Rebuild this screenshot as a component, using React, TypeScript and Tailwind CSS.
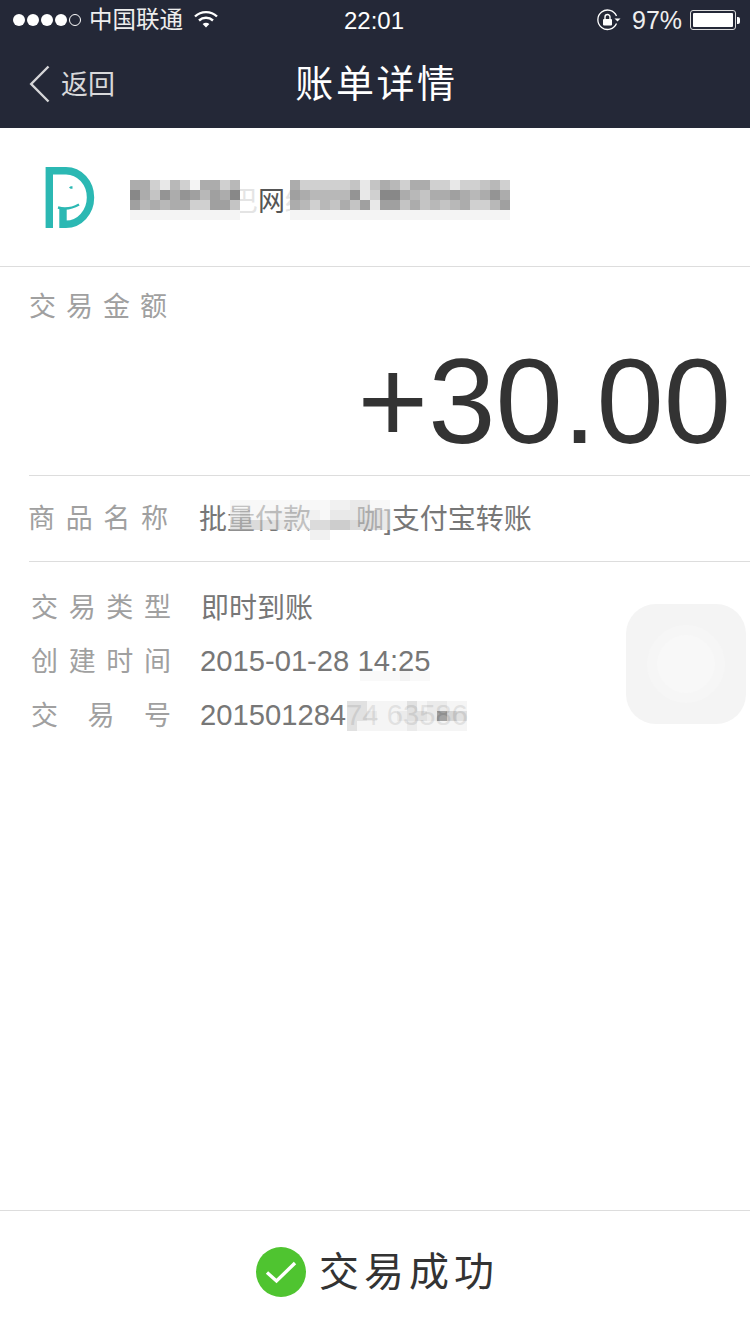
const font = "font-['Liberation_Sans','Noto_Sans_CJK_SC',sans-serif]";

// pixelated patches over the hidden text: one char per 10px cell, 0 dark .. 9 near white, "." empty
function Mosaic({ rows, className }: { rows: string[]; className: string }) {
  return (
    <svg
      className={`absolute blur-[0.6px] ${className}`}
      width={rows[0].length * 10}
      height={rows.length * 10}
      shapeRendering="crispEdges"
    >
      {rows.map((row, y) =>
        row.split("").map((c, x) => {
          if (c === ".") return null;
          const v = 136 + Number(c) * 12;
          return <rect key={`${x}-${y}`} x={x * 10} y={y * 10} width={10} height={10} fill={`rgb(${v},${v},${v})`} />;
        })
      )}
    </svg>
  );
}

function StatusBar() {
  return (
    <div className="h-10 flex items-center text-white">
      <div className="flex items-center gap-[2px] ml-[13px]">
        <span className="w-[12px] h-[12px] rounded-full bg-white" />
        <span className="w-[12px] h-[12px] rounded-full bg-white" />
        <span className="w-[12px] h-[12px] rounded-full bg-white" />
        <span className="w-[12px] h-[12px] rounded-full bg-white" />
        <span className="w-[12px] h-[12px] rounded-full border border-white" />
      </div>
      <span className="ml-[8px] mt-[2px] text-[23.5px] text-[#eeeeee]">中国联通</span>
      <svg className="ml-[11px] mb-[3px]" width="24" height="18" viewBox="0 0 24 18" fill="none" stroke="#fff" strokeWidth="2.4">
        <path d="M1 6.5C7 .6 17 .6 23 6.5" />
        <path d="M5 10.5c4-3.6 10-3.6 14 0" />
        <path d="M12 17.5 8.6 14c2-1.6 4.800-1.600 6.800 0z" fill="#fff" stroke="none" />
      </svg>
      <span className="ml-[126px] mt-[1px] w-[60px] text-[24px] font-medium">22:01</span>
      <svg className="ml-[193px]" width="24" height="22" viewBox="0 0 24 22" fill="none">
        <path d="M19.500 14.500A9.700 9.700 0 1 1 19.500 7" stroke="#fff" strokeWidth="1.300" />
        <path d="M17.500 9.500h6l-3 3z" fill="#fff" />
        <rect x="6" y="10" width="9" height="6.500" rx="1" fill="#fff" />
        <path d="M8 10V8a2.500 2.500 0 0 1 5 0v2" stroke="#fff" strokeWidth="1.400" />
      </svg>
      <span className="ml-[11px] mt-[1px] text-[25px] text-[#eeeeee]">97%</span>
      <div className="ml-[8px] flex items-center">
        <div className="w-[46px] h-[20px] rounded-[3px] border border-[#dddddd] p-[2px]">
          <div className="w-[40px] h-full rounded-[1px] bg-white" />
        </div>
        <div className="w-[3px] h-[7px] ml-[1px] bg-white rounded-r-[2px]" />
      </div>
    </div>
  );
}

function NavBar() {
  return (
    <div className="h-[88px] grid grid-cols-3 items-center">
      <div className="flex items-center pl-[29px]">
        <svg width="21" height="38" viewBox="0 0 21 38" fill="none" stroke="#d6d6d8" strokeWidth="2.4">
          <path d="M19.500 1.500 2.200 19l17.300 17.500" />
        </svg>
        <span className="ml-[11px] mt-[3px] text-[27px] text-[#d8d8da]">返回</span>
      </div>
      <div className="pl-[3px] text-center text-[38px] tracking-[2.6px] text-white whitespace-nowrap">账单详情</div>
      <div />
    </div>
  );
}

function Logo() {
  return (
    <svg width="50" height="61" viewBox="0 0 50 61" fill="none">
      <path d="M4.300 61V3.700H21A24.500 26.800 0 0 1 21 57.300H18V41" stroke="#2bb8b3" strokeWidth="7.400" />
      <path d="M13 40.500c7 2 14 1 21-3" stroke="#2bb8b3" strokeWidth="2.400" />
      <path d="M24 20.500c1-1.200 2.500-1.500 3.500-1.200v2.400c-1.500.3-2.500 0-3.500-1.200z" fill="#2bb8b3" />
    </svg>
  );
}

function Label({ chars }: { chars: string[] }) {
  return (
    <div className="w-[140px] flex justify-between text-[27px] leading-none text-[#a0a0a0]">
      {chars.map((c) => (
        <span key={c}>{c}</span>
      ))}
    </div>
  );
}

export default function App() {
  return (
    <div className={`relative w-[750px] h-[1334px] flex flex-col bg-white ${font}`}>
      <header className="bg-[#242837]">
        <StatusBar />
        <NavBar />
      </header>

      <section className="relative h-[139px] flex items-center border-b border-[#dddddd] pl-[45px]">
        <Logo />
        <span className="absolute left-[231px] top-[54px] text-[27px] text-[#e4e4e4]">巴</span>
        <span className="absolute left-[285px] top-[54px] text-[27px] text-[#e4e4e4]">终</span>
        <Mosaic
          className="left-[130px] top-[52px]"
          rows={[
            "33684693364.....3666665853463366866546",
            "03513124230.....2344441860034533234313",
            "24343366225.....3464535282253545436642",
            "99999999999.....9999999999999999999999",
          ]}
        />
        <span className="absolute left-[258px] top-[54px] text-[27px] text-[#555555]">网</span>
      </section>

      <section className="h-[209px] border-b border-[#dddddd] ml-[29px]">
        <div className="pt-[24px] text-[27px] leading-[32px] tracking-[10px] text-[#a0a0a0]">交易金额</div>
        <div className="pr-[19px] pt-[17px] text-right text-[121px] leading-[122px] text-[#333333]">+30.00</div>
      </section>

      <section className="relative h-[86px] pt-[2px] flex items-center border-b border-[#dddddd] ml-[29px]">
        <div className="w-[140px] flex justify-between text-[27px] leading-none text-[#a0a0a0] -ml-px">
          <span>商</span>
          <span>品</span>
          <span>名</span>
          <span>称</span>
        </div>
        <div className="ml-[31px] text-[28px] leading-none text-[#777777] whitespace-nowrap">
          批量付款<span className="inline-block w-[45px]" />咖]支付宝转账
        </div>
        <Mosaic
          className="left-[201px] top-[24px] opacity-60"
          rows={["9999999999887799", "8699887889777667", "6556678955335567", "........88......"]}
        />
      </section>

      <section className="pt-[19px] pl-[31px]">
        <div className="h-[54px] flex items-center">
          <Label chars={["交", "易", "类", "型"]} />
          <span className="ml-[30px] mt-[2px] text-[28px] text-[#777777]">即时到账</span>
        </div>
        <div className="relative h-[54px] flex items-center">
          <Label chars={["创", "建", "时", "间"]} />
          <span className="ml-[29px] text-[29.2px] text-[#777777]">2015-01-28 14:25</span>
          <Mosaic className="left-[329px] top-[36px] opacity-50" rows={["9999899"]} />
        </div>
        <div className="relative h-[54px] flex items-center">
          <Label chars={["交", "易", "号"]} />
          <span className="ml-[29px] text-[29.2px] text-[#777777]">20150128474 63586</span>
          <Mosaic
            className="left-[316px] top-[12px] opacity-85"
            rows={["779999798899", "778998778167", "799999899999"]}
          />
        </div>
      </section>

      <div className="flex-1" />

      <footer className="h-[124px] pb-[2px] pl-[5px] flex items-center justify-center border-t border-[#dddddd]">
        <svg className="mr-[13px]" width="50" height="50" viewBox="0 0 50 50">
          <circle cx="25" cy="25" r="25" fill="#4fc430" />
          <path d="M11 25.500 20.500 34 39 16" fill="none" stroke="#ffffff" strokeWidth="3.400" />
        </svg>
        <span className="text-[40px] tracking-[5px] text-[#333333]">交易成功</span>
      </footer>

      {/* assistive touch button floating over the page */}
      <div className="absolute left-[626px] top-[604px] w-[120px] h-[120px] rounded-[30px] bg-[#f4f4f4] flex items-center justify-center">
        <div className="w-[78px] h-[78px] rounded-full bg-[#f6f6f6] flex items-center justify-center">
          <div className="w-[58px] h-[58px] rounded-full bg-[#f8f8f8]" />
        </div>
      </div>
    </div>
  );
}
